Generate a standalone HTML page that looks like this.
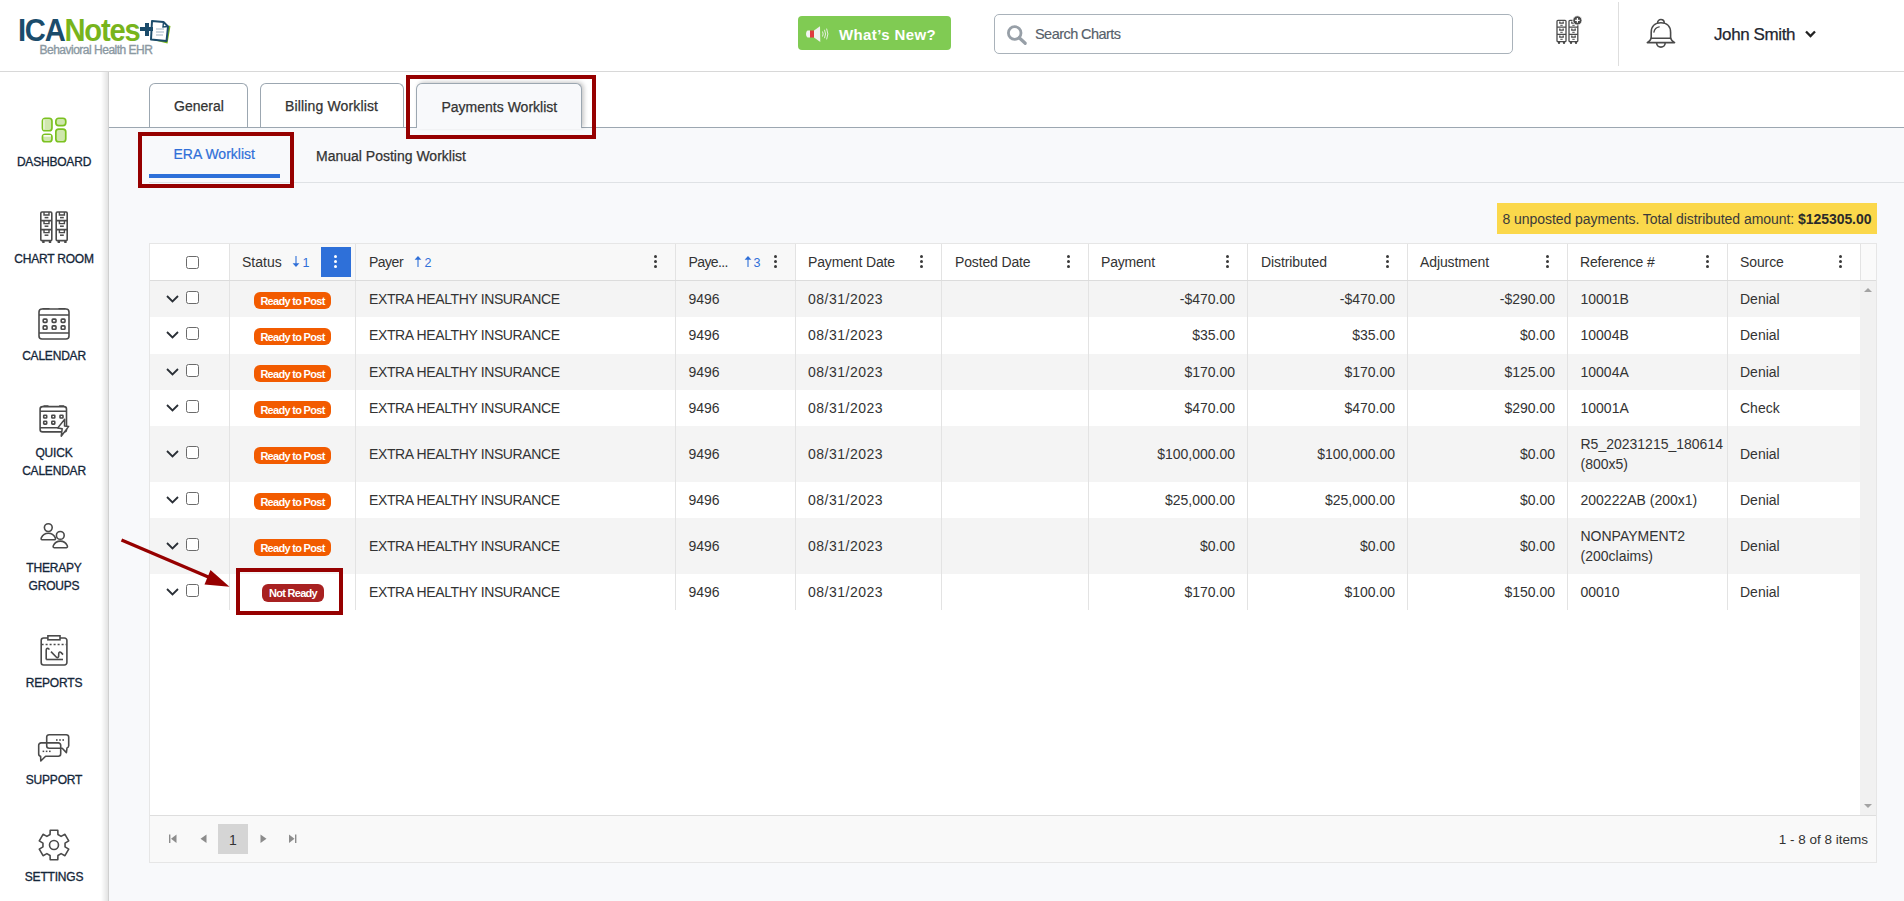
<!DOCTYPE html><html><head><meta charset="utf-8"><title>ERA Worklist</title><style>
*{box-sizing:border-box;margin:0;padding:0}
html,body{width:1904px;height:901px;overflow:hidden;background:#f8f9fb;font-family:"Liberation Sans",sans-serif;color:#333}
.t{position:absolute;white-space:nowrap;line-height:1}
.b{position:absolute}
.nav{position:absolute;left:0;width:108px;text-align:center;font-size:12px;color:#142639;line-height:18px;letter-spacing:-0.2px;-webkit-text-stroke:0.3px #142639}
.tab{position:absolute;top:83px;height:44px;border:1px solid #9ca7b1;border-bottom:none;border-radius:6px 6px 0 0;background:#fff}
.dots{position:absolute;width:4px;height:14px}
.dots i{position:absolute;left:0;width:3.4px;height:3.4px;border-radius:50%;background:#3a3a3a}
.cell{position:absolute;font-size:14px;line-height:1;white-space:nowrap;color:#333}
.badge{position:absolute;height:17px;border-radius:6px;color:#fff;font-weight:700;font-size:11px;line-height:18px;text-align:center;letter-spacing:-0.7px}
.cb{position:absolute;width:13px;height:13px;border:1px solid #6b6b6b;border-radius:2.5px;background:#fff}
.chev{position:absolute;width:13px;height:8px}
</style></head><body>
<div class="b" style="left:0;top:0;width:1904px;height:71px;background:#fff"></div>
<div class="b" style="left:0;top:71px;width:1904px;height:1px;background:#d8d8d8"></div>
<div class="t" style="left:17.8px;top:14.7px;font-size:31px;font-weight:700;letter-spacing:-1.3px;transform:scaleX(0.94);transform-origin:0 0"><span style="color:#1b4c6b">ICA</span><span style="color:#78b41c">Notes</span></div>
<svg class="b" style="left:148px;top:18px" width="24" height="28" viewBox="0 0 24 28"><path d="M5 22 L19.5 25.5 L22.5 8 L20.5 7.5 L18 22.5 L5 20 Z" fill="#78b41c"/><path d="M4 3 L15.5 4 L20 8.5 L18.5 23 L3 21.5 Z" fill="#fff" stroke="#1b4c6b" stroke-width="2" stroke-linejoin="round"/><path d="M15.5 4 L15 9 L20 8.5" fill="none" stroke="#1b4c6b" stroke-width="1.4"/><path d="M8 11 H16 M8 14 H16 M8 17 H15" stroke="#9fb3c2" stroke-width="1"/></svg>
<div class="b" style="left:140px;top:27.4px;width:13px;height:3.6px;background:#1b4c6b"></div>
<div class="b" style="left:144.8px;top:23.4px;width:3.8px;height:12.5px;background:#1b4c6b"></div>
<div class="t" style="left:39.5px;top:43.6px;font-size:12px;color:#8a98a2;letter-spacing:-0.5px;-webkit-text-stroke:0.35px #8a98a2">Behavioral Health EHR</div>
<div class="b" style="left:798px;top:16px;width:153px;height:34px;background:#80cb53;border-radius:4px"></div>
<svg class="b" style="left:798px;top:16px" width="40" height="34" viewBox="0 0 40 34"><path d="M12 14.5 L9.5 14.5 Q8 15 8 18 Q8 21 9.5 21.5 L12 21.5 Z" fill="#f4f4f4"/><rect x="12" y="14.5" width="4" height="7" fill="#e0393f"/><path d="M16 14.5 L22 10.2 L22.3 26 L16 21.5 Z" fill="#f0f0f0"/><path d="M24.5 15.5 Q25.8 18 24.5 20.5 M26.5 13.8 Q28.6 18 26.5 22.2 M28.6 12.6 Q31.2 18 28.6 23.4" stroke="#f4f4f4" stroke-width="0.9" fill="none"/></svg>
<div class="t" style="left:839px;top:26.5px;font-size:15px;font-weight:700;color:#fff;letter-spacing:0.4px">What’s New?</div>
<div class="b" style="left:994px;top:14px;width:519px;height:40px;border:1px solid #a9b2ba;border-radius:5px;background:#fff"></div>
<svg class="b" style="left:1005px;top:24px" width="24" height="24" viewBox="0 0 24 24"><circle cx="9.7" cy="9" r="6.3" stroke="#979fa7" stroke-width="2.8" fill="none"/><path d="M14.2 13.8 L20.2 19.3" stroke="#979fa7" stroke-width="3.2" stroke-linecap="round"/></svg>
<div class="t" style="left:1035px;top:27.0px;font-size:14.5px;color:#56606a;letter-spacing:-0.55px;-webkit-text-stroke:0.15px #56606a">Search Charts</div>
<svg class="b" style="left:1553px;top:14px" width="32" height="32" viewBox="0 0 32 32"><g stroke="#4a4a4a" stroke-width="1.3" fill="none"><rect x="4" y="6.3" width="9" height="21.4" rx="1"/><rect x="16" y="6.3" width="8.8" height="21.4" rx="1"/><path d="M4 13.2 H13 M4 20.3 H13 M16 13.2 H24.8 M16 20.3 H24.8"/><path d="M18.8 7.5 V9.2 H22.2 V7.5 M6.8 7.5 V9.2 H10.2 V7.5 M6.8 14.4 V16.1 H10.2 V14.4 M6.8 21.5 V23.2 H10.2 V21.5 M18.8 14.4 V16.1 H22.2 V14.4 M18.8 21.5 V23.2 H22.2 V21.5"/><path d="M19.3 11.3 H21.7 M7.3 11.3 H9.7 M7.3 18.3 H9.7 M7.3 25.3 H9.7 M19.3 18.3 H21.7 M19.3 25.3 H21.7" stroke-width="1"/></g><g fill="#4a4a4a"><circle cx="6" cy="28.8" r="1.2"/><circle cx="11" cy="28.8" r="1.2"/><circle cx="18" cy="28.8" r="1.2"/><circle cx="23" cy="28.8" r="1.2"/></g><circle cx="24.4" cy="6.4" r="4.6" fill="#4a4a4a" stroke="#fff" stroke-width="0.8"/><path d="M22.1 6.4 H26.7 M24.4 4.1 V8.7" stroke="#fff" stroke-width="1.2"/></svg>
<div class="b" style="left:1618px;top:2px;width:1px;height:64px;background:#dedede"></div>
<svg class="b" style="left:1645px;top:18px" width="32" height="31" viewBox="0 0 32 31"><g stroke="#4a4a4a" stroke-width="1.6" fill="none" stroke-linejoin="round" stroke-linecap="round"><path d="M12.6 4.8 A3.3 3.3 0 0 1 19.2 4.8"/><path d="M6.2 20.2 V14.5 C6.2 8.5 10 4.8 15.9 4.8 C21.8 4.8 25.6 8.5 25.6 14.5 V20.2"/><path d="M6.2 20.2 H25.6"/><path d="M6.2 20.2 Q5.6 22.6 2.3 24.6 H29.6 Q26.3 22.6 25.6 20.2"/><path d="M11.6 24.8 A4.3 4.3 0 0 0 20.2 24.8"/><path d="M8.9 14.2 Q9.8 9.6 14.2 8.9" stroke-width="1.3"/></g></svg>
<div class="t" style="left:1714px;top:25.6px;font-size:17px;color:#1f2630;letter-spacing:-0.4px;-webkit-text-stroke:0.25px #1f2630">John Smith</div>
<svg class="b" style="left:1804px;top:29px" width="13" height="10" viewBox="0 0 13 10"><path d="M2 2.5 L6.5 7 L11 2.5" stroke="#222" stroke-width="2.3" fill="none"/></svg>
<div class="b" style="left:0;top:72px;width:108px;height:829px;background:#fff"></div>
<div class="b" style="left:101px;top:72px;width:7px;height:829px;background:linear-gradient(to right,rgba(0,0,0,0),rgba(0,0,0,0.11))"></div>
<div class="b" style="left:108px;top:72px;width:1px;height:829px;background:#d0d0d0"></div>
<div class="nav" style="top:152.8px">DASHBOARD</div>
<div class="nav" style="top:249.8px">CHART ROOM</div>
<div class="nav" style="top:346.8px">CALENDAR</div>
<div class="nav" style="top:444.3px">QUICK<br>CALENDAR</div>
<div class="nav" style="top:559.3px">THERAPY<br>GROUPS</div>
<div class="nav" style="top:673.8px">REPORTS</div>
<div class="nav" style="top:770.8px">SUPPORT</div>
<div class="nav" style="top:867.8px">SETTINGS</div>
<svg class="b" style="left:40px;top:116px" width="28" height="28" viewBox="0 0 28 28"><g stroke="#7bc120" stroke-width="1.7" fill="#cfe7ad"><rect x="2.45" y="2.25" width="9.5" height="12.5" rx="2.8"/><rect x="15.85" y="2.25" width="9.9" height="7.3" rx="2.8"/><rect x="2.45" y="18.25" width="9.5" height="7.5" rx="2.8"/><rect x="15.85" y="13.05" width="9.9" height="12.7" rx="2.8"/></g><rect x="3.4" y="3.3" width="1" height="10.6" fill="#fff"/><rect x="3.4" y="19.2" width="7.6" height="1.4" fill="#fff"/></svg>
<svg class="b" style="left:38px;top:210px" width="32" height="34" viewBox="0 0 32 34"><g stroke="#4a4a4a" stroke-width="1.6" fill="none"><rect x="2.8" y="2" width="11" height="28.6" rx="1.2"/><path d="M2.8 10.6 H13.8 M2.8 19.6 H13.8"/><path d="M6 2 V5 H11 V2" stroke-width="1.4"/><path d="M6.6 7.6 H10.4" stroke-width="1.5"/><path d="M6 10.6 V13.6 H11 V10.6" stroke-width="1.4"/><path d="M6.6 16.2 H10.4" stroke-width="1.5"/><path d="M6 19.6 V22.6 H11 V19.6" stroke-width="1.4"/><path d="M6.6 25.200000000000003 H10.4" stroke-width="1.5"/><path d="M4.2 32 H6.6 M10.8 32 H13.2" stroke-width="2"/><rect x="18.2" y="2" width="11" height="28.6" rx="1.2"/><path d="M18.2 10.6 H29.200000000000003 M18.2 19.6 H29.200000000000003"/><path d="M21.4 2 V5 H26.4 V2" stroke-width="1.4"/><path d="M22.0 7.6 H25.8" stroke-width="1.5"/><path d="M21.4 10.6 V13.6 H26.4 V10.6" stroke-width="1.4"/><path d="M22.0 16.2 H25.8" stroke-width="1.5"/><path d="M21.4 19.6 V22.6 H26.4 V19.6" stroke-width="1.4"/><path d="M22.0 25.200000000000003 H25.8" stroke-width="1.5"/><path d="M19.6 32 H22.0 M26.200000000000003 32 H28.6" stroke-width="2"/></g></svg>
<svg class="b" style="left:37px;top:307px" width="34" height="34" viewBox="0 0 34 34"><g stroke="#4a4a4a" stroke-width="1.6" fill="none"><rect x="2" y="2" width="30" height="30" rx="3"/><path d="M2 8 H32 M2 26 H32"/><rect x="6.2" y="12.1" width="3.8" height="3.3" rx="0.8"/><rect x="15.2" y="12.1" width="3.8" height="3.3" rx="0.8"/><rect x="24.2" y="12.1" width="3.8" height="3.3" rx="0.8"/><rect x="6.2" y="18.9" width="3.8" height="3.4" rx="0.8"/><rect x="15.2" y="18.9" width="3.8" height="3.4" rx="0.8"/><rect x="24.2" y="18.9" width="3.8" height="3.4" rx="0.8"/><path d="M6 1.6 H12 M22 1.6 H28" stroke-width="1.4" stroke-linecap="round"/></g></svg>
<svg class="b" style="left:37px;top:404px" width="34" height="34" viewBox="0 0 34 34"><g stroke="#4a4a4a" stroke-width="1.6" fill="none" stroke-linejoin="round"><rect x="3.1" y="2.6" width="26.4" height="25.3" rx="2.5"/><path d="M7 2 H11 M22.6 2 H26.6" stroke-width="1.4" stroke-linecap="round"/><path d="M3.1 7.3 H29.5 M3.1 23.7 H29.5"/><rect x="6.7" y="11.2" width="3" height="2.8" rx="0.6"/><rect x="14.8" y="11.2" width="3" height="2.8" rx="0.6"/><rect x="23" y="11.2" width="3" height="2.8" rx="0.6"/><rect x="6.7" y="17.3" width="3" height="2.8" rx="0.6"/><rect x="14.8" y="17.3" width="3" height="2.8" rx="0.6"/><path d="M27.7 15.3 L20.8 23.9 L25.2 24.7 L24.2 32.2 L31.7 22.4 L27.5 22 Z" fill="#fff" stroke-width="1.5"/></g></svg>
<svg class="b" style="left:39px;top:522px" width="30" height="28" viewBox="0 0 30 28"><g stroke="#4a4a4a" stroke-width="1.6" fill="none"><circle cx="9.3" cy="5.6" r="3.9"/><path d="M3.2 17.8 Q1.6 17.6 2.4 15.6 C3.8 12.6 6.6 11.2 9.3 11.2 C12 11.2 14.8 12.6 16.2 15.6 Q17 17.6 15.4 17.8 Z"/><circle cx="21.3" cy="13.4" r="3.9"/><path d="M15.2 25.700000000000003 Q13.6 25.5 14.4 23.5 C15.8 20.5 18.6 19.1 21.3 19.1 C24 19.1 26.8 20.5 28.2 23.5 Q29 25.5 27.4 25.700000000000003 Z"/></g></svg>
<svg class="b" style="left:39px;top:634px" width="30" height="34" viewBox="0 0 30 34"><g stroke="#4a4a4a" stroke-width="1.6" fill="none"><path d="M8.9 4 H4.6 A2.4 2.4 0 0 0 2.2 6.4 V28.6 A2.4 2.4 0 0 0 4.6 31 H25.5 A2.4 2.4 0 0 0 27.9 28.6 V6.4 A2.4 2.4 0 0 0 25.5 4 H21"/><rect x="8.9" y="1.8" width="12.1" height="4" /><path d="M2.6 10.5 H27.5" stroke-dasharray="2 2" stroke-width="1.7"/><path d="M7.2 25.5 V16.4 Q7.2 14.3 8.7 14.3 Q9.7 14.4 10.3 15.6"/><path d="M7.2 25.5 H24"/><path d="M12 17.6 L17.2 23 Q18.6 24.4 19.6 22.6 L19.8 19 Q20.6 17.2 22.2 18.6 L24 20.6"/></g></svg>
<svg class="b" style="left:37px;top:733px" width="34" height="30" viewBox="0 0 34 30"><g stroke="#4a4a4a" stroke-width="1.6" fill="none" stroke-linejoin="round"><path d="M12.1 1.7 H29.3 A2.4 2.4 0 0 1 31.7 4.1 V12.8 A2.4 2.4 0 0 1 30 15 L29.4 19.6 L25.2 15.2 H12.1 A2.4 2.4 0 0 1 9.7 12.8 V4.1 A2.4 2.4 0 0 1 12.1 1.7 Z"/><path d="M4.1 9.9 H21.3 A2.4 2.4 0 0 1 23.7 12.3 V20.8 A2.4 2.4 0 0 1 21.3 23.2 H8.6 L3.8 28 L3.6 23.3 A2.2 2.2 0 0 1 1.7 21.1 V12.3 A2.4 2.4 0 0 1 4.1 9.9 Z"/></g><g fill="#4a4a4a"><rect x="19" y="6.2" width="1.6" height="1.6"/><rect x="22.2" y="6.2" width="1.6" height="1.6"/><rect x="25.4" y="6.2" width="1.6" height="1.6"/><rect x="5.6" y="17.6" width="1.6" height="1.5"/><rect x="8.8" y="17.6" width="1.6" height="1.5"/><rect x="12" y="17.6" width="1.6" height="1.5"/></g></svg>
<svg class="b" style="left:36.7px;top:828.3px" width="34" height="34" viewBox="0 0 34 34"><g stroke="#4a4a4a" stroke-width="1.6" fill="none" stroke-linejoin="round"><path d="M13.05 6.52 L13.21 2.18 L20.79 2.18 L20.95 6.52 L24.10 8.34 L27.95 6.31 L31.73 12.87 L28.05 15.18 L28.05 18.82 L31.73 21.13 L27.95 27.69 L24.10 25.66 L20.95 27.48 L20.79 31.82 L13.21 31.82 L13.05 27.48 L9.90 25.66 L6.05 27.69 L2.27 21.13 L5.95 18.82 L5.95 15.18 L2.27 12.87 L6.05 6.31 L9.90 8.34 Z"/><circle cx="17" cy="17" r="4.5"/></g></svg>
<div class="b" style="left:109px;top:72px;width:1795px;height:55px;background:#fff"></div>
<div class="b" style="left:109px;top:127px;width:1795px;height:1px;background:#9ca7b1"></div>
<div class="tab" style="left:149px;width:99px"></div>
<div class="tab" style="left:260px;width:144px"></div>
<div class="tab" style="left:416px;width:166px;height:45px;background:#f8f9fb;box-shadow:2px -1px 4px rgba(0,0,0,0.22)"></div>
<div class="b" style="left:417px;top:127px;width:164px;height:2px;background:#f8f9fb"></div>
<div class="t" style="left:174px;top:99.1px;font-size:14px;color:#333;-webkit-text-stroke:0.25px #333">General</div>
<div class="t" style="left:285px;top:99.1px;font-size:14px;color:#333;letter-spacing:0.15px;-webkit-text-stroke:0.25px #333">Billing Worklist</div>
<div class="t" style="left:441.5px;top:100.1px;font-size:14px;color:#333;-webkit-text-stroke:0.25px #333">Payments Worklist</div>
<div class="t" style="left:173.5px;top:147.3px;font-size:14px;color:#2f6fd8;-webkit-text-stroke:0.2px #2f6fd8">ERA Worklist</div>
<div class="t" style="left:316px;top:149.3px;font-size:14px;color:#333;-webkit-text-stroke:0.25px #333">Manual Posting Worklist</div>
<div class="b" style="left:149px;top:182px;width:1755px;height:1px;background:#dfe2e5"></div>
<div class="b" style="left:149px;top:174px;width:131px;height:4px;background:#2e70d9"></div>
<div class="b" style="left:1497px;top:203px;width:380px;height:31px;background:#fbd84b"></div>
<div class="t" style="left:1502.5px;top:211.9px;font-size:14px;color:#3a3a3a;letter-spacing:-0.05px">8 unposted payments. Total distributed amount: <b style="color:#2a2a2a">$125305.00</b></div>
<div class="b" style="left:149px;top:243px;width:1728px;height:620px;background:#fff;border:1px solid #e6e6e6"></div>
<div class="b" style="left:229px;top:244px;width:126px;height:36px;background:#f8f8f8"></div>
<div class="b" style="left:355px;top:244px;width:320px;height:36px;background:#f8f8f8"></div>
<div class="b" style="left:675px;top:244px;width:120px;height:36px;background:#f8f8f8"></div>
<div class="b" style="left:1860px;top:244px;width:16px;height:36px;background:#fafafa"></div>
<div class="b" style="left:150px;top:281px;width:1710px;height:36px;background:#f4f4f4"></div>
<div class="b" style="left:150px;top:354px;width:1710px;height:36px;background:#f4f4f4"></div>
<div class="b" style="left:150px;top:426px;width:1710px;height:56px;background:#f4f4f4"></div>
<div class="b" style="left:150px;top:518px;width:1710px;height:56px;background:#f4f4f4"></div>
<div class="b" style="left:150px;top:280px;width:1726px;height:1px;background:#dcdcdc"></div>
<div class="b" style="left:229px;top:244px;width:1px;height:36px;background:#e3e3e3"></div>
<div class="b" style="left:229px;top:281px;width:1px;height:329px;background:#e3e3e3"></div>
<div class="b" style="left:355px;top:244px;width:1px;height:36px;background:#e3e3e3"></div>
<div class="b" style="left:355px;top:281px;width:1px;height:329px;background:#e3e3e3"></div>
<div class="b" style="left:675px;top:244px;width:1px;height:36px;background:#e3e3e3"></div>
<div class="b" style="left:675px;top:281px;width:1px;height:329px;background:#e3e3e3"></div>
<div class="b" style="left:795px;top:244px;width:1px;height:36px;background:#e3e3e3"></div>
<div class="b" style="left:795px;top:281px;width:1px;height:329px;background:#e3e3e3"></div>
<div class="b" style="left:941px;top:244px;width:1px;height:36px;background:#e3e3e3"></div>
<div class="b" style="left:941px;top:281px;width:1px;height:329px;background:#e3e3e3"></div>
<div class="b" style="left:1088px;top:244px;width:1px;height:36px;background:#e3e3e3"></div>
<div class="b" style="left:1088px;top:281px;width:1px;height:329px;background:#e3e3e3"></div>
<div class="b" style="left:1247px;top:244px;width:1px;height:36px;background:#e3e3e3"></div>
<div class="b" style="left:1247px;top:281px;width:1px;height:329px;background:#e3e3e3"></div>
<div class="b" style="left:1407px;top:244px;width:1px;height:36px;background:#e3e3e3"></div>
<div class="b" style="left:1407px;top:281px;width:1px;height:329px;background:#e3e3e3"></div>
<div class="b" style="left:1567px;top:244px;width:1px;height:36px;background:#e3e3e3"></div>
<div class="b" style="left:1567px;top:281px;width:1px;height:329px;background:#e3e3e3"></div>
<div class="b" style="left:1727px;top:244px;width:1px;height:36px;background:#e3e3e3"></div>
<div class="b" style="left:1727px;top:281px;width:1px;height:329px;background:#e3e3e3"></div>
<div class="b" style="left:1860px;top:244px;width:1px;height:36px;background:#e3e3e3"></div>
<div class="b" style="left:1860px;top:281px;width:16px;height:534px;background:#f1f1f1"></div>
<svg class="b" style="left:1863px;top:286px" width="10" height="8"><path d="M1 6 L5 2 L9 6 Z" fill="#a3a3a3"/></svg>
<svg class="b" style="left:1863px;top:802px" width="10" height="8"><path d="M1 2 L5 6 L9 2 Z" fill="#a3a3a3"/></svg>
<div class="cb" style="left:186px;top:256px"></div>
<div class="cell" style="left:242px;top:255.0px;">Status</div>
<div class="cell" style="left:369px;top:255.0px;letter-spacing:-0.5px">Payer</div>
<div class="cell" style="left:688.5px;top:255.0px;letter-spacing:-0.6px">Paye...</div>
<div class="cell" style="left:808px;top:255.0px;letter-spacing:-0.15px">Payment Date</div>
<div class="cell" style="left:955px;top:255.0px;letter-spacing:-0.15px">Posted Date</div>
<div class="cell" style="left:1101px;top:255.0px;letter-spacing:-0.2px">Payment</div>
<div class="cell" style="left:1261px;top:255.0px;letter-spacing:-0.1px">Distributed</div>
<div class="cell" style="left:1420px;top:255.0px;letter-spacing:-0.1px">Adjustment</div>
<div class="cell" style="left:1580px;top:255.0px;letter-spacing:-0.15px">Reference #</div>
<div class="cell" style="left:1740px;top:255.0px;letter-spacing:-0.1px">Source</div>
<svg class="b" style="left:291.5px;top:256px" width="8" height="12" viewBox="0 0 8 12"><path d="M4 0 V8" stroke="#2f6fd8" stroke-width="1.1"/><path d="M0.6 7.2 L4 11 L7.4 7.2 Z" fill="#2f6fd8"/></svg>
<div class="cell" style="left:302.5px;top:257.1px;font-size:12.5px;color:#2f6fd8">1</div>
<svg class="b" style="left:413.5px;top:256px" width="8" height="12" viewBox="0 0 8 12"><path d="M4 3 V11" stroke="#2f6fd8" stroke-width="1.1"/><path d="M0.6 3.8 L4 0 L7.4 3.8 Z" fill="#2f6fd8"/></svg>
<div class="cell" style="left:424.5px;top:257.1px;font-size:12.5px;color:#2f6fd8">2</div>
<svg class="b" style="left:743.5px;top:256px" width="8" height="12" viewBox="0 0 8 12"><path d="M4 3 V11" stroke="#2f6fd8" stroke-width="1.1"/><path d="M0.6 3.8 L4 0 L7.4 3.8 Z" fill="#2f6fd8"/></svg>
<div class="cell" style="left:753.5px;top:257.1px;font-size:12.5px;color:#2f6fd8">3</div>
<div class="b" style="left:321px;top:247px;width:30px;height:30px;background:#2e70d9"></div>
<div class="dots" style="left:334.1px;top:254.6px"><i style="top:0px;background:#fff"></i><i style="top:5.1px;background:#fff"></i><i style="top:10.1px;background:#fff"></i></div>
<div class="dots" style="left:653.8px;top:254.6px"><i style="top:0px;background:#3a3a3a"></i><i style="top:5.1px;background:#3a3a3a"></i><i style="top:10.1px;background:#3a3a3a"></i></div>
<div class="dots" style="left:773.8px;top:254.6px"><i style="top:0px;background:#3a3a3a"></i><i style="top:5.1px;background:#3a3a3a"></i><i style="top:10.1px;background:#3a3a3a"></i></div>
<div class="dots" style="left:919.8px;top:254.6px"><i style="top:0px;background:#3a3a3a"></i><i style="top:5.1px;background:#3a3a3a"></i><i style="top:10.1px;background:#3a3a3a"></i></div>
<div class="dots" style="left:1066.8px;top:254.6px"><i style="top:0px;background:#3a3a3a"></i><i style="top:5.1px;background:#3a3a3a"></i><i style="top:10.1px;background:#3a3a3a"></i></div>
<div class="dots" style="left:1225.8px;top:254.6px"><i style="top:0px;background:#3a3a3a"></i><i style="top:5.1px;background:#3a3a3a"></i><i style="top:10.1px;background:#3a3a3a"></i></div>
<div class="dots" style="left:1385.8px;top:254.6px"><i style="top:0px;background:#3a3a3a"></i><i style="top:5.1px;background:#3a3a3a"></i><i style="top:10.1px;background:#3a3a3a"></i></div>
<div class="dots" style="left:1545.8px;top:254.6px"><i style="top:0px;background:#3a3a3a"></i><i style="top:5.1px;background:#3a3a3a"></i><i style="top:10.1px;background:#3a3a3a"></i></div>
<div class="dots" style="left:1705.8px;top:254.6px"><i style="top:0px;background:#3a3a3a"></i><i style="top:5.1px;background:#3a3a3a"></i><i style="top:10.1px;background:#3a3a3a"></i></div>
<div class="dots" style="left:1838.8px;top:254.6px"><i style="top:0px;background:#3a3a3a"></i><i style="top:5.1px;background:#3a3a3a"></i><i style="top:10.1px;background:#3a3a3a"></i></div>
<svg class="chev" style="left:165.5px;top:294.5px" viewBox="0 0 13 8"><path d="M1 1 L6.5 6.5 L12 1" stroke="#2a2f36" stroke-width="1.8" fill="none"/></svg>
<div class="cb" style="left:186px;top:291.0px"></div>
<div class="badge" style="left:254px;top:292.0px;width:77px;background:#f25b00">Ready to Post</div>
<div class="cell" style="left:369px;top:292.1px;letter-spacing:-0.38px">EXTRA HEALTHY INSURANCE</div>
<div class="cell" style="left:688.5px;top:292.1px">9496</div>
<div class="cell" style="left:808px;top:292.1px;letter-spacing:0.5px">08/31/2023</div>
<div class="cell" style="left:1035px;width:200px;text-align:right;top:292.1px">-$470.00</div>
<div class="cell" style="left:1195px;width:200px;text-align:right;top:292.1px">-$470.00</div>
<div class="cell" style="left:1355px;width:200px;text-align:right;top:292.1px">-$290.00</div>
<div class="cell" style="left:1580.5px;top:292.1px">10001B</div>
<div class="cell" style="left:1740px;top:292.1px">Denial</div>
<svg class="chev" style="left:165.5px;top:330.5px" viewBox="0 0 13 8"><path d="M1 1 L6.5 6.5 L12 1" stroke="#2a2f36" stroke-width="1.8" fill="none"/></svg>
<div class="cb" style="left:186px;top:327.0px"></div>
<div class="badge" style="left:254px;top:328.0px;width:77px;background:#f25b00">Ready to Post</div>
<div class="cell" style="left:369px;top:328.1px;letter-spacing:-0.38px">EXTRA HEALTHY INSURANCE</div>
<div class="cell" style="left:688.5px;top:328.1px">9496</div>
<div class="cell" style="left:808px;top:328.1px;letter-spacing:0.5px">08/31/2023</div>
<div class="cell" style="left:1035px;width:200px;text-align:right;top:328.1px">$35.00</div>
<div class="cell" style="left:1195px;width:200px;text-align:right;top:328.1px">$35.00</div>
<div class="cell" style="left:1355px;width:200px;text-align:right;top:328.1px">$0.00</div>
<div class="cell" style="left:1580.5px;top:328.1px">10004B</div>
<div class="cell" style="left:1740px;top:328.1px">Denial</div>
<svg class="chev" style="left:165.5px;top:367.5px" viewBox="0 0 13 8"><path d="M1 1 L6.5 6.5 L12 1" stroke="#2a2f36" stroke-width="1.8" fill="none"/></svg>
<div class="cb" style="left:186px;top:364.0px"></div>
<div class="badge" style="left:254px;top:365.0px;width:77px;background:#f25b00">Ready to Post</div>
<div class="cell" style="left:369px;top:365.1px;letter-spacing:-0.38px">EXTRA HEALTHY INSURANCE</div>
<div class="cell" style="left:688.5px;top:365.1px">9496</div>
<div class="cell" style="left:808px;top:365.1px;letter-spacing:0.5px">08/31/2023</div>
<div class="cell" style="left:1035px;width:200px;text-align:right;top:365.1px">$170.00</div>
<div class="cell" style="left:1195px;width:200px;text-align:right;top:365.1px">$170.00</div>
<div class="cell" style="left:1355px;width:200px;text-align:right;top:365.1px">$125.00</div>
<div class="cell" style="left:1580.5px;top:365.1px">10004A</div>
<div class="cell" style="left:1740px;top:365.1px">Denial</div>
<svg class="chev" style="left:165.5px;top:403.5px" viewBox="0 0 13 8"><path d="M1 1 L6.5 6.5 L12 1" stroke="#2a2f36" stroke-width="1.8" fill="none"/></svg>
<div class="cb" style="left:186px;top:400.0px"></div>
<div class="badge" style="left:254px;top:401.0px;width:77px;background:#f25b00">Ready to Post</div>
<div class="cell" style="left:369px;top:401.1px;letter-spacing:-0.38px">EXTRA HEALTHY INSURANCE</div>
<div class="cell" style="left:688.5px;top:401.1px">9496</div>
<div class="cell" style="left:808px;top:401.1px;letter-spacing:0.5px">08/31/2023</div>
<div class="cell" style="left:1035px;width:200px;text-align:right;top:401.1px">$470.00</div>
<div class="cell" style="left:1195px;width:200px;text-align:right;top:401.1px">$470.00</div>
<div class="cell" style="left:1355px;width:200px;text-align:right;top:401.1px">$290.00</div>
<div class="cell" style="left:1580.5px;top:401.1px">10001A</div>
<div class="cell" style="left:1740px;top:401.1px">Check</div>
<svg class="chev" style="left:165.5px;top:449.5px" viewBox="0 0 13 8"><path d="M1 1 L6.5 6.5 L12 1" stroke="#2a2f36" stroke-width="1.8" fill="none"/></svg>
<div class="cb" style="left:186px;top:446.0px"></div>
<div class="badge" style="left:254px;top:447.0px;width:77px;background:#f25b00">Ready to Post</div>
<div class="cell" style="left:369px;top:447.1px;letter-spacing:-0.38px">EXTRA HEALTHY INSURANCE</div>
<div class="cell" style="left:688.5px;top:447.1px">9496</div>
<div class="cell" style="left:808px;top:447.1px;letter-spacing:0.5px">08/31/2023</div>
<div class="cell" style="left:1035px;width:200px;text-align:right;top:447.1px">$100,000.00</div>
<div class="cell" style="left:1195px;width:200px;text-align:right;top:447.1px">$100,000.00</div>
<div class="cell" style="left:1355px;width:200px;text-align:right;top:447.1px">$0.00</div>
<div class="cell" style="left:1580.5px;top:437.1px">R5_20231215_180614</div>
<div class="cell" style="left:1580.5px;top:457.1px">(800x5)</div>
<div class="cell" style="left:1740px;top:447.1px">Denial</div>
<svg class="chev" style="left:165.5px;top:495.5px" viewBox="0 0 13 8"><path d="M1 1 L6.5 6.5 L12 1" stroke="#2a2f36" stroke-width="1.8" fill="none"/></svg>
<div class="cb" style="left:186px;top:492.0px"></div>
<div class="badge" style="left:254px;top:493.0px;width:77px;background:#f25b00">Ready to Post</div>
<div class="cell" style="left:369px;top:493.1px;letter-spacing:-0.38px">EXTRA HEALTHY INSURANCE</div>
<div class="cell" style="left:688.5px;top:493.1px">9496</div>
<div class="cell" style="left:808px;top:493.1px;letter-spacing:0.5px">08/31/2023</div>
<div class="cell" style="left:1035px;width:200px;text-align:right;top:493.1px">$25,000.00</div>
<div class="cell" style="left:1195px;width:200px;text-align:right;top:493.1px">$25,000.00</div>
<div class="cell" style="left:1355px;width:200px;text-align:right;top:493.1px">$0.00</div>
<div class="cell" style="left:1580.5px;top:493.1px">200222AB (200x1)</div>
<div class="cell" style="left:1740px;top:493.1px">Denial</div>
<svg class="chev" style="left:165.5px;top:541.5px" viewBox="0 0 13 8"><path d="M1 1 L6.5 6.5 L12 1" stroke="#2a2f36" stroke-width="1.8" fill="none"/></svg>
<div class="cb" style="left:186px;top:538.0px"></div>
<div class="badge" style="left:254px;top:539.0px;width:77px;background:#f25b00">Ready to Post</div>
<div class="cell" style="left:369px;top:539.1px;letter-spacing:-0.38px">EXTRA HEALTHY INSURANCE</div>
<div class="cell" style="left:688.5px;top:539.1px">9496</div>
<div class="cell" style="left:808px;top:539.1px;letter-spacing:0.5px">08/31/2023</div>
<div class="cell" style="left:1035px;width:200px;text-align:right;top:539.1px">$0.00</div>
<div class="cell" style="left:1195px;width:200px;text-align:right;top:539.1px">$0.00</div>
<div class="cell" style="left:1355px;width:200px;text-align:right;top:539.1px">$0.00</div>
<div class="cell" style="left:1580.5px;top:529.1px">NONPAYMENT2</div>
<div class="cell" style="left:1580.5px;top:549.1px">(200claims)</div>
<div class="cell" style="left:1740px;top:539.1px">Denial</div>
<svg class="chev" style="left:165.5px;top:587.5px" viewBox="0 0 13 8"><path d="M1 1 L6.5 6.5 L12 1" stroke="#2a2f36" stroke-width="1.8" fill="none"/></svg>
<div class="cb" style="left:186px;top:584.0px"></div>
<div class="badge" style="left:262px;top:584.0px;width:62px;height:17.5px;background:#a82121">Not Ready</div>
<div class="cell" style="left:369px;top:585.1px;letter-spacing:-0.38px">EXTRA HEALTHY INSURANCE</div>
<div class="cell" style="left:688.5px;top:585.1px">9496</div>
<div class="cell" style="left:808px;top:585.1px;letter-spacing:0.5px">08/31/2023</div>
<div class="cell" style="left:1035px;width:200px;text-align:right;top:585.1px">$170.00</div>
<div class="cell" style="left:1195px;width:200px;text-align:right;top:585.1px">$100.00</div>
<div class="cell" style="left:1355px;width:200px;text-align:right;top:585.1px">$150.00</div>
<div class="cell" style="left:1580.5px;top:585.1px">00010</div>
<div class="cell" style="left:1740px;top:585.1px">Denial</div>
<div class="b" style="left:150px;top:815px;width:1726px;height:47px;background:#f9f9f9;border-top:1px solid #dedede"></div>
<svg class="b" style="left:168px;top:833px" width="10" height="11" viewBox="0 0 10 11"><rect x="1" y="1.5" width="1.4" height="8.5" fill="#8c8c8c"/><path d="M8.5 1.5 V10 L3 5.75 Z" fill="#8c8c8c"/></svg>
<svg class="b" style="left:199px;top:833px" width="10" height="11" viewBox="0 0 10 11"><path d="M7.5 1.5 V10 L1.5 5.75 Z" fill="#8c8c8c"/></svg>
<div class="b" style="left:218px;top:824px;width:30px;height:30px;background:#d5d5d5"></div>
<div class="cell" style="left:218px;width:30px;text-align:center;top:833.1px;color:#333">1</div>
<svg class="b" style="left:259px;top:833px" width="10" height="11" viewBox="0 0 10 11"><path d="M1.5 1.5 V10 L7.5 5.75 Z" fill="#8c8c8c"/></svg>
<svg class="b" style="left:288px;top:833px" width="10" height="11" viewBox="0 0 10 11"><path d="M1 1.5 V10 L6.5 5.75 Z" fill="#8c8c8c"/><rect x="7" y="1.5" width="1.4" height="8.5" fill="#8c8c8c"/></svg>
<div class="cell" style="left:1668px;width:200px;text-align:right;top:833.2px;font-size:13.5px;color:#333">1 - 8 of 8 items</div>
<div class="b" style="left:406px;top:75px;width:190px;height:64px;border:4px solid #960000"></div>
<div class="b" style="left:138px;top:132px;width:156px;height:56px;border:4px solid #960000"></div>
<div class="b" style="left:236px;top:568px;width:107px;height:47px;border:4px solid #960000"></div>
<svg class="b" style="left:0;top:0" width="400" height="700" viewBox="0 0 400 700"><path d="M121.5 540 L213 579" stroke="#960000" stroke-width="3.4"/><path d="M229.5 586.8 L210.5 570 L204.5 584.5 Z" fill="#960000"/></svg>
</body></html>
